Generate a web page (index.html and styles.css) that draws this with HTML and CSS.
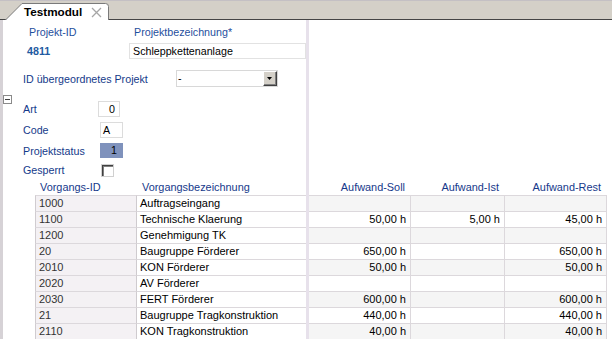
FILE: index.html
```html
<!DOCTYPE html>
<html lang="de">
<head>
<meta charset="utf-8">
<title>Testmodul</title>
<link rel="stylesheet" href="styles.css">
</head>
<body>
<div class="app">
  <div class="tabbar">
    <div class="tab">
      <svg class="tab-shape" width="104" height="17" viewBox="0 0 104 17"><path d="M0.5 17 L17 0.5 L100.5 0.5 Q103.5 0.5 103.5 3.5 L103.5 17" fill="#ffffff" stroke="#7a7a7a" stroke-width="1"/></svg>
      <span class="tab-title">Testmodul</span>
      <svg class="tab-close" width="11" height="11" viewBox="0 0 11 11"><path d="M1 1 L10 10 M10 1 L1 10" stroke="#a6a6a6" stroke-width="1.3" fill="none"/></svg>
    </div>
  </div>
  <div class="workspace">
    <div class="stripe"></div>
    <div class="pane pane-left">
      <div class="top">
        <div class="proj">
          <div class="lbl lbl-head pl2">Projekt-ID</div>
          <div class="lbl lbl-head pl5">Projektbezeichnung*</div>
          <div class="proj-id">4811</div>
          <div class="field field-wide">Schleppkettenanlage</div>
        </div>
        <div class="parent-row">
          <div class="lbl parent-lbl">ID übergeordnetes Projekt</div>
          <div class="select">
            <span class="select-val">-</span>
            <span class="select-btn"><svg width="6" height="4" viewBox="0 0 6 4"><path d="M0 0 H5 L2.5 3 Z" fill="#000"/></svg></span>
          </div>
        </div>
        <div class="section">
          <div class="toggle"><span class="toggle-minus"></span></div>
          <div class="lbl">Art</div>
          <div class="val"><div class="field box box-art align-r">0</div></div>
          <div class="lbl">Code</div>
          <div class="val"><div class="field box">A</div></div>
          <div class="lbl">Projektstatus</div>
          <div class="val"><div class="box box-status align-r">1</div></div>
          <div class="lbl row-short">Gesperrt</div>
          <div class="val row-short"><span class="checkbox"></span></div>
        </div>
      </div>
      <div class="grid grid-left">
        <div class="gh pl5">Vorgangs-ID</div>
        <div class="gh pl5">Vorgangsbezeichnung</div>
        <div class="c cid">1000</div><div class="c cdesc">Auftragseingang</div>
        <div class="c cid">1100</div><div class="c cdesc">Technische Klaerung</div>
        <div class="c cid">1200</div><div class="c cdesc">Genehmigung TK</div>
        <div class="c cid">20</div><div class="c cdesc">Baugruppe Förderer</div>
        <div class="c cid">2010</div><div class="c cdesc">KON Förderer</div>
        <div class="c cid">2020</div><div class="c cdesc">AV Förderer</div>
        <div class="c cid">2030</div><div class="c cdesc">FERT Förderer</div>
        <div class="c cid">21</div><div class="c cdesc">Baugruppe Tragkonstruktion</div>
        <div class="c cid">2110</div><div class="c cdesc">KON Tragkonstruktion</div>
      </div>
    </div>
    <div class="divider"></div>
    <div class="pane pane-right">
      <div class="top"></div>
      <div class="grid grid-right">
        <div class="gh align-r pr6">Aufwand-Soll</div>
        <div class="gh align-r pr6">Aufwand-Ist</div>
        <div class="gh align-r pr6">Aufwand-Rest</div>
        <div class="c cn odd"></div><div class="c cn odd"></div><div class="c cn odd"></div>
        <div class="c cn">50,00 h</div><div class="c cn">5,00 h</div><div class="c cn">45,00 h</div>
        <div class="c cn odd"></div><div class="c cn odd"></div><div class="c cn odd"></div>
        <div class="c cn">650,00 h</div><div class="c cn"></div><div class="c cn">650,00 h</div>
        <div class="c cn odd">50,00 h</div><div class="c cn odd"></div><div class="c cn odd">50,00 h</div>
        <div class="c cn"></div><div class="c cn"></div><div class="c cn"></div>
        <div class="c cn odd">600,00 h</div><div class="c cn odd"></div><div class="c cn odd">600,00 h</div>
        <div class="c cn">440,00 h</div><div class="c cn"></div><div class="c cn">440,00 h</div>
        <div class="c cn odd">40,00 h</div><div class="c cn odd"></div><div class="c cn odd">40,00 h</div>
      </div>
    </div>
  </div>
</div>
</body>
</html>
```

FILE: styles.css
```css
* { box-sizing: border-box; }
html, body { margin: 0; padding: 0; }
body {
  width: 612px;
  height: 339px;
  overflow: hidden;
  background: #ffffff;
  font-family: "Liberation Sans", Arial, sans-serif;
  font-size: 10.7px;
  color: #000;
}
.app { display: flex; flex-direction: column; height: 339px; }

/* tab bar */
.tabbar {
  height: 20px;
  flex: none;
  background: #d4d0c8;
  border-top: 1px solid #c4c0c4;
  border-bottom: 1px solid #454545;
  display: flex;
  align-items: flex-end;
  padding-left: 5px;
}
.tab {
  position: relative;
  width: 104px;
  height: 17px;
  margin-bottom: -1px;
  display: flex;
  align-items: center;
  padding-left: 19px;
  z-index: 1;
}
.tab-shape { position: absolute; left: 0; top: 0; z-index: -1; }
.tab-title { font-weight: bold; font-size: 11.7px; line-height: 16px; padding-top: 1px; }
.tab-close { margin-left: 9px; margin-top: 1px; }

/* workspace */
.workspace { flex: 1; display: flex; min-height: 0; }
.stripe { width: 3px; flex: none; background: #d6d2d6; }
.pane-left { width: 303px; flex: none; display: flex; flex-direction: column; }
.divider { width: 3px; flex: none; background: #e7e1eb; }
.pane-right { flex: 1; display: flex; flex-direction: column; }
.top { height: 159px; flex: none; }

.lbl { color: #143a8a; line-height: 16px; white-space: nowrap; }
.lbl-head { color: #1f4f9d; }
.pl2 { padding-left: 2px; }
.pl5 { padding-left: 5px; }
.pr6 { padding-right: 6px; }
.align-r { text-align: right; }

.proj {
  display: grid;
  grid-template-columns: 102px 1fr;
  grid-template-rows: 16px 16px;
  row-gap: 3px;
  padding-top: 4px;
  padding-left: 24px;
}
.proj-id { color: #1f5aa1; font-weight: bold; line-height: 16px; font-size: 10.7px; }
.field {
  border: 1px solid #dcdcdc;
  background: #fff;
  line-height: 14px;
  height: 16px;
  padding-left: 3px;
  white-space: nowrap;
}
.field-wide { border-color: #e2e2e2; }

.parent-row {
  display: flex;
  align-items: center;
  height: 17px;
  margin-top: 11px;
  padding-left: 20px;
}
.parent-lbl { width: 153px; }
.select {
  width: 102px;
  height: 17px;
  border: 1px solid #d8d8d8;
  display: flex;
  align-items: stretch;
}
.select-val { flex: 1; line-height: 15px; padding-left: 1px; }
.select-btn {
  width: 14px;
  background: #d4d0c8;
  border-style: solid;
  border-width: 1px;
  border-color: #ffffff #404040 #404040 #ffffff;
  box-shadow: inset -1px -1px #808080;
  display: flex;
  align-items: center;
  justify-content: center;
  padding-top: 1px;
}

.section {
  display: grid;
  grid-template-columns: 20px 77px 1fr;
  grid-template-rows: 21px 21px 21px 18px;
  margin-top: 11px;
}
.toggle { grid-row: 1 / span 4; grid-column: 1; align-self: start; margin-top: -3px; }
.toggle-minus {
  display: block;
  width: 9px;
  height: 9px;
  border: 1px solid #8a8a8a;
  background: #fff linear-gradient(#404040, #404040) no-repeat center / 5px 1px;
}
.section .lbl { grid-column: 2; align-self: center; }
.val { grid-column: 3; display: flex; align-items: center; }
.box { width: 23px; height: 16px; line-height: 14px; padding-left: 2px; }
.box-art { width: 22px; margin-left: -2px; padding-right: 4px; }
.box-status {
  background: #7f92bc;
  height: 15px;
  line-height: 15px;
  padding-right: 6px;
  border: none;
}
.checkbox {
  display: block;
  width: 13px;
  height: 13px;
  margin-left: 1px;
  border: 1px solid #d0d0d0;
  background: #fff;
  box-shadow: inset 1px 1px #404040, inset 2px 2px #808080;
}

/* grids */
.grid { display: grid; grid-auto-rows: 16px; grid-template-rows: 16px; }
.grid-left { grid-template-columns: 102px 169px; margin-left: 32px; }
.grid-right { grid-template-columns: 102px 94px 102px; }
.gh { color: #16398b; line-height: 16px; white-space: nowrap; font-size: 10.9px; }
.c {
  font-size: 11px;
  line-height: 15px;
  border-top: 1px solid #dcd8dc;
  border-right: 1px solid #dcd8dc;
  white-space: nowrap;
  overflow: hidden;
}
.cid { background: #f4f1f4; color: #333; padding-left: 3px; border-left: 1px solid #d0ccd0; border-right-color: #cfcbcf; }
.cdesc { background: #fff; padding-left: 3px; border-right: none; }
.cn { text-align: right; padding-right: 4px; background: #fff; }
.cn.odd { background: #f5f5f5; }
```
